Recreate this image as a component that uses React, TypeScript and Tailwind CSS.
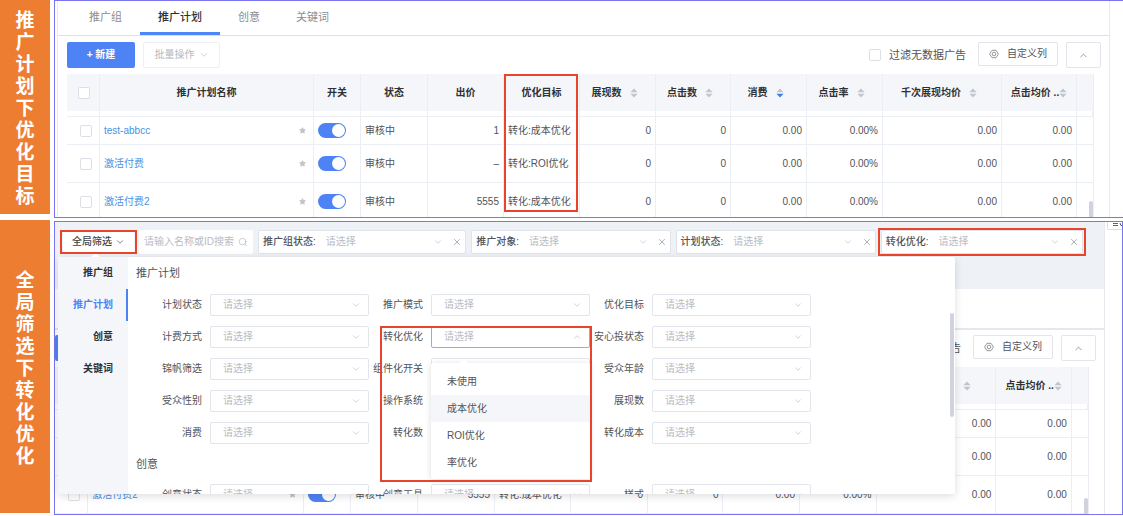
import React from 'react';
import { ChevronDown, ChevronUp, Search, Star, X } from 'lucide-react';

interface Column {
  title: string;
  width: string;
  sort?: 'none' | 'desc';
  tight?: boolean;
  marked?: boolean;
}

const columns: Column[] = [
  { title: '推广计划名称', width: 'w-[214px]' },
  { title: '开关', width: 'w-[47px]' },
  { title: '状态', width: 'w-[67px]' },
  { title: '出价', width: 'w-[76px]' },
  { title: '优化目标', width: 'w-[76px]', marked: true },
  { title: '展现数', width: 'w-[76px]', sort: 'none' },
  { title: '点击数', width: 'w-[75px]', sort: 'none' },
  { title: '消费', width: 'w-[76px]', sort: 'desc' },
  { title: '点击率', width: 'w-[76px]', sort: 'none' },
  { title: '千次展现均价', width: 'w-[119px]', sort: 'none' },
  { title: '点击均价 ..', width: 'w-[75px]', sort: 'none', tight: true },
];

const plans = [
  { name: 'test-abbcc', bid: '1', goal: '转化:成本优化', height: 'h-7' },
  { name: '激活付费', bid: '–', goal: '转化:ROI优化', height: 'h-[38px]' },
  { name: '激活付费2', bid: '5555', goal: '转化:成本优化', height: 'h-[38px]' },
];

const planFields = [
  '计划状态', '推广模式', '优化目标',
  '计费方式', '转化优化', '安心投状态',
  '锦帆筛选', '组件化开关', '受众年龄',
  '受众性别', '操作系统', '展现数',
  '消费', '转化数', '转化成本',
];

const creativeFields = ['创意状态', '创意工具', '样式'];

const goalOptions = ['未使用', '成本优化', 'ROI优化', '率优化'];

function Mark({ className }: { className: string }) {
  return <span className={`pointer-events-none absolute z-20 border-2 border-[#e8442c] ${className}`} />;
}

function SideLabel({ text }: { text: string }) {
  return (
    <div className="flex items-center justify-center bg-[#ed7d31] pt-1">
      <h2 className="w-[19px] text-[19px] leading-[22px] font-bold break-all text-white">{text}</h2>
    </div>
  );
}

function Checkbox({ label, id }: { label?: string; id?: string }) {
  return (
    <input
      type="checkbox"
      id={id}
      aria-label={label}
      className="block size-[12px] shrink-0 appearance-none rounded-xs border border-[#dcdfe6] bg-white"
    />
  );
}

function SortIcon({ active }: { active: boolean }) {
  return (
    <svg viewBox="0 0 8 10" className="h-[10px] w-2 shrink-0">
      <path d="M4 0.5 L7.6 4.2 H0.4 Z" fill="#c0c4cc" />
      <path d="M4 9.5 L7.6 5.8 H0.4 Z" fill={active ? '#3f7df6' : '#c0c4cc'} />
    </svg>
  );
}

function GearIcon() {
  return (
    <svg viewBox="0 0 20 20" className="size-[10px]" fill="none" stroke="#7c7f86" strokeWidth="1.6">
      <path d="M6 2.6 H14 L18.8 10 L14 17.4 H6 L1.2 10 Z" strokeLinejoin="round" />
      <circle cx="10" cy="10" r="3.6" />
    </svg>
  );
}

function Tabs() {
  const tabs = ['推广组', '推广计划', '创意', '关键词'];
  return (
    <nav className="flex h-full items-stretch">
      {tabs.map((tab) => (
        <button
          key={tab}
          className={
            tab === '推广计划'
              ? 'border-b-[3px] border-[#4e86f7] px-[18px] text-[11px] font-medium text-[#303133]'
              : 'border-b-[3px] border-transparent px-[18px] text-[11px] text-[#8a8d93]'
          }
        >
          {tab}
        </button>
      ))}
    </nav>
  );
}

function Toolbar({ id }: { id: string }) {
  return (
    <div className="flex items-start pr-2">
      <button className="h-[26px] w-[68px] rounded-xs bg-[#4e83f5] font-bold text-white">+ 新建</button>
      <button className="ml-2 flex h-[26px] w-[77px] items-center justify-center gap-1 rounded-xs border border-[#eef0f4] text-[#b4b8c0]">
        批量操作
        <ChevronDown className="size-[10px]" strokeWidth={1.5} />
      </button>
      <div className="ml-auto flex h-[26px] items-center gap-2">
        <Checkbox id={id} />
        <label htmlFor={id} className="text-[11px] text-[#505359]">过滤无数据广告</label>
      </div>
      <button className="ml-3 flex h-6 w-[80px] items-center justify-center gap-2 rounded-xs border border-[#e2e5eb]">
        <GearIcon />
        自定义列
      </button>
      <button
        aria-label="收起"
        className="ml-2 flex h-[26px] w-[35px] items-center justify-center rounded-xs border border-[#e2e5eb] text-[#85888f]"
      >
        <ChevronUp className="size-[11px]" strokeWidth={1.8} />
      </button>
    </div>
  );
}

function PlanTable({ marked }: { marked?: boolean }) {
  const cell = 'border-r border-b border-[#ebeef5] px-1';
  return (
    <div className="relative mt-[6px] mr-[15px] min-h-0 flex-1 overflow-hidden border-r border-[#ebeef5]">
      <table className="w-full table-fixed border-separate border-spacing-0">
        <thead>
          <tr className="h-[37px] bg-[#f5f6fa] text-[#303133]">
            <th className="w-[33px] border-r border-[#ebeef5] pl-[11px]">
              <Checkbox label="全选" />
            </th>
            {columns.map((col) => (
              <th
                key={col.title}
                className={`relative border-r border-[#ebeef5] p-0 font-bold whitespace-nowrap ${col.width}`}
              >
                <span
                  className={`flex items-center justify-center ${
                    col.sort && !col.tight ? 'gap-2 pr-[6px]' : ''
                  }`}
                >
                  {col.title}
                  {col.sort && <SortIcon active={col.sort === 'desc'} />}
                </span>
                {marked && col.marked && (
                  <Mark className="top-0 right-px left-0 h-[138px]" />
                )}
              </th>
            ))}
            <th className="w-4" />
          </tr>
        </thead>
        <tbody>
          {/* tail of the row scrolled under the header */}
          <tr className="h-[6px]">
            {Array.from({ length: 13 }, (_, i) => (
              <td key={i} className="border-r border-b border-[#ebeef5] p-0" />
            ))}
          </tr>
          {plans.map((plan) => (
            <tr key={plan.name} className={plan.height}>
              <td className="border-r border-b border-[#ebeef5] pl-[13px]">
                <Checkbox label={plan.name} />
              </td>
              <td className={cell}>
                <span className="flex items-center justify-between pr-[3px]">
                  <a href="#" className="text-[#4a90e2]">{plan.name}</a>
                  <Star className="size-[7px] fill-[#c0c4cc] text-[#c0c4cc]" />
                </span>
              </td>
              <td className={cell}>
                <input
                  type="checkbox"
                  role="switch"
                  defaultChecked
                  aria-label={`${plan.name} 开关`}
                  className="flex h-[15px] w-7 appearance-none items-center justify-end rounded-full bg-[#4e83f5] px-px after:size-[13px] after:rounded-full after:bg-white"
                />
              </td>
              <td className={cell}>审核中</td>
              <td className={`${cell} text-right`}>{plan.bid}</td>
              <td className={`${cell} whitespace-nowrap`}>{plan.goal}</td>
              <td className={`${cell} text-right`}>0</td>
              <td className={`${cell} text-right`}>0</td>
              <td className={`${cell} text-right`}>0.00</td>
              <td className={`${cell} text-right`}>0.00%</td>
              <td className={`${cell} text-right`}>0.00</td>
              <td className={`${cell} text-right`}>0.00</td>
              <td className="border-b border-[#ebeef5]" />
            </tr>
          ))}
        </tbody>
      </table>
      <span className="absolute right-0 bottom-0 h-4 w-1 rounded-t-full bg-[#d0d3de]" />
    </div>
  );
}

function FilterBox({ label, marked }: { label: string; marked?: boolean }) {
  return (
    <div className="relative flex items-center rounded-xs border border-[#dfe3ea] bg-white pr-[3px] pl-1">
      <label htmlFor={`bar-${label}`} className="font-medium text-[#505359]">{label}:</label>
      <select id={`bar-${label}`} className="ml-[10px] min-w-0 flex-1 appearance-none text-[#b8bcc4]">
        <option>请选择</option>
      </select>
      <ChevronDown className="size-[10px] text-[#b8bcc4]" strokeWidth={1.6} />
      <button aria-label={`移除${label}`} className="ml-[9px] text-[#94979e]">
        <X className="size-[10px]" strokeWidth={1.8} />
      </button>
      {marked && <Mark className="-inset-x-[4px] -inset-y-[3px]" />}
    </div>
  );
}

function GoalOptions() {
  return (
    <div className="absolute inset-x-0 top-[37px] z-10 rounded-xs bg-white pt-[5px] pb-[3px] shadow-[0_1px_6px_rgba(0,0,0,0.14)]">
      <span className="absolute -top-[3px] left-[29px] size-[7px] rotate-45 bg-white" />
      <ul className="relative">
        {goalOptions.map((option) => (
          <li
            key={option}
            className={
              option === '成本优化'
                ? 'flex h-[27px] items-center bg-[#f5f6fa] px-4'
                : 'flex h-[27px] items-center px-4'
            }
          >
            {option}
          </li>
        ))}
      </ul>
    </div>
  );
}

function Field({ label, open }: { label: string; open?: boolean }) {
  return (
    <div className="relative flex items-center">
      <label htmlFor={`field-${label}`} className="w-[62px] shrink-0 pr-2 text-right whitespace-nowrap">
        {label}
      </label>
      <div className="relative flex-1">
        <select
          id={`field-${label}`}
          className={`block h-[22px] w-full appearance-none rounded-xs border bg-white px-3 text-[#b8bcc4] ${
            open ? 'border-[#8fb0dc]' : 'border-[#e2e5eb]'
          }`}
        >
          <option>请选择</option>
        </select>
        {open ? (
          <ChevronUp className="absolute top-[6px] right-2 size-[10px] text-[#b8bcc4]" strokeWidth={1.6} />
        ) : (
          <ChevronDown className="absolute top-[6px] right-2 size-[10px] text-[#b8bcc4]" strokeWidth={1.6} />
        )}
        {open && <GoalOptions />}
      </div>
      {open && <Mark className="top-0 -right-[2px] left-[11px] h-[156px]" />}
    </div>
  );
}

function FilterPopover() {
  const menu = ['推广组', '推广计划', '创意', '关键词'];
  return (
    <div className="absolute top-[35px] right-[149px] left-[3px] z-10 h-[237px] rounded-xs bg-white shadow-[0_2px_8px_rgba(0,0,0,0.14)]">
      <span className="absolute -top-[3px] left-[34px] size-[7px] rotate-45 bg-white" />
      <div className="relative flex h-full overflow-hidden">
        <nav className="flex w-[70px] shrink-0 flex-col bg-[#f5f6fa]">
          {menu.map((item) => (
            <button
              key={item}
              className={
                item === '推广计划'
                  ? 'h-8 border-r-2 border-[#4e83f5] pr-[13px] text-right font-bold text-[#4e83f5]'
                  : 'h-8 pr-[15px] text-right font-bold text-[#303133]'
              }
            >
              {item}
            </button>
          ))}
        </nav>
        <div className="-mt-[5px] flex-1">
          <h3 className="flex h-[42px] items-center pl-2 text-[11px]">推广计划</h3>
          <div className="grid grid-cols-3 gap-y-[10px] pr-[144px] pl-5">
            {planFields.map((label) => (
              <Field key={label} label={label} open={label === '转化优化'} />
            ))}
          </div>
          <h3 className="flex h-10 items-center pl-2 text-[11px]">创意</h3>
          <div className="grid grid-cols-3 pr-[144px] pl-5">
            {creativeFields.map((label) => (
              <Field key={label} label={label} />
            ))}
          </div>
        </div>
        <span className="absolute top-14 right-px h-[104px] w-1 rounded-full bg-[#d0d3de]" />
      </div>
    </div>
  );
}

function PlanPanel() {
  return (
    <section className="flex h-[218px] border border-[#7874f2] pl-[2px]">
      <div className="flex min-w-0 flex-1 flex-col border-x border-[#e8eaef]">
        <div className="h-[35px] border-b border-[#dcdfe6] pl-[13px]">
          <Tabs />
        </div>
        <div className="flex min-h-0 flex-1 flex-col pt-[6px] pl-[9px]">
          <Toolbar id="hide-empty-top" />
          <PlanTable marked />
        </div>
      </div>
      <div className="w-[13px] shrink-0" />
    </section>
  );
}

function FilterPanel() {
  return (
    <section className="mt-px flex h-[294px] border border-[#7874f2]">
      <div className="relative flex min-w-0 flex-1 flex-col border-r border-[#e8eaef]">
        <div className="h-[67px] shrink-0 bg-[#eef2f7] pt-2 pr-[21px] pl-2">
          <div className="grid h-6 grid-cols-[71px_114px_208fr_199fr_200fr_202fr] gap-[5px]">
            <button className="relative flex items-center justify-center gap-[3px] bg-white font-medium text-[#404348]">
              全局筛选
              <ChevronDown className="size-[10px]" strokeWidth={1.6} />
              <Mark className="-inset-x-[3px] inset-y-0" />
            </button>
            <div className="flex items-center rounded-xs bg-white px-[5px]">
              <input
                type="text"
                aria-label="搜索"
                placeholder="请输入名称或ID搜索"
                className="min-w-0 flex-1 placeholder:text-[#b8bcc4]"
              />
              <Search className="size-[10px] shrink-0 text-[#b8bcc4]" strokeWidth={1.8} />
            </div>
            <FilterBox label="推广组状态" />
            <FilterBox label="推广对象" />
            <FilterBox label="计划状态" />
            <FilterBox label="转化优化" marked />
          </div>
        </div>
        <div className="h-[41px] shrink-0 border-b-2 border-[#e4e7ed] pl-[13px]">
          <Tabs />
        </div>
        <div className="flex min-h-0 flex-1 flex-col pt-[5px]">
          <Toolbar id="hide-empty-bottom" />
          <PlanTable />
        </div>
        <FilterPopover />
      </div>
      <div className="w-[17px] shrink-0 overflow-hidden pl-[2px]">
        <button aria-label="展开" className="flex h-2 w-5 rounded-bl-xs border-b border-l border-[#dcdfe6] pl-1">
          <svg viewBox="0 0 12 5" className="h-[5px] w-3" fill="none" stroke="#606266">
            <path d="M1 1.5 H6 M1 3.5 H6 M8 1 Q8 4 11 4" />
          </svg>
        </button>
      </div>
    </section>
  );
}

export default function App() {
  return (
    <main className="flex flex-col gap-[2px] overflow-hidden bg-white font-['Liberation_Sans','Noto_Sans_CJK_SC',sans-serif] text-[10px] leading-[14px] text-[#505359]">
      <div className="grid grid-cols-[50px_1fr] gap-x-1">
        <div className="grid pb-1">
          <SideLabel text="推广计划下优化目标" />
        </div>
        <PlanPanel />
      </div>
      <div className="grid grid-cols-[50px_1fr] gap-x-1">
        <div className="grid pb-[2px]">
          <SideLabel text="全局筛选下转化优化" />
        </div>
        <FilterPanel />
      </div>
    </main>
  );
}
